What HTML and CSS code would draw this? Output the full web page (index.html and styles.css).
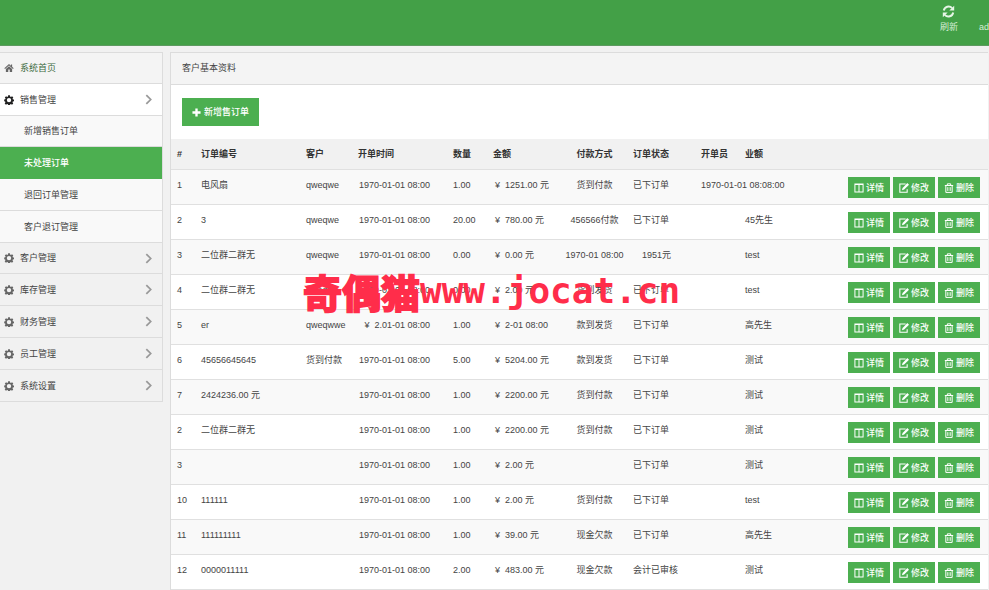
FILE: index.html
```html
<!DOCTYPE html>
<html lang="zh-CN">
<head>
<meta charset="utf-8">
<title>未处理订单</title>
<link rel="stylesheet" href="styles.css">
</head>
<body>
<svg class="sprite" aria-hidden="true">
  <symbol id="home" viewBox="0 0 16 16"><path d="M8 1.5 0.5 8.3l1.2 1.3L8 4l6.300 5.600 1.200-1.300-2.500-2.300V2.500h-2v1.700zM8 5.200 3 9.700V14.500h3.800v-4h2.400v4H13V9.700z"/></symbol>
  <symbol id="gear" viewBox="0 0 16 16"><path fill-rule="evenodd" d="M6.600 0.500h2.800l.4 2 1.300.600 1.800-1.200 2 2-1.200 1.800.6 1.300 1.700.3v2.800l-1.900.4-.5 1.200 1.200 1.900-2 2-1.800-1.200-1.300.6-.3 1.700H6.600l-.4-1.900-1.200-.6-1.900 1.200-2-2 1.200-1.900-.5-1.200-1.500-.3V7.200l1.700-.4.5-1.200-1.200-1.800 2-2 1.800 1.200 1.200-.5zM8 4.600a3.500 3.500 0 1 0 0 7 3.500 3.500 0 0 0 0-7z"/></symbol>
  <symbol id="chevron" viewBox="0 0 8 12"><path d="M1.500 1 6.500 6l-5 5" fill="none" stroke="currentColor" stroke-width="2"/></symbol>
  <symbol id="plus" viewBox="0 0 10 10"><path d="M3.700 0.500h2.600v3.200h3.200v2.600H6.300v3.200H3.700V6.300H0.500V3.700h3.200z"/></symbol>
  <symbol id="refresh" viewBox="0 0 16 16"><path d="M2.200 6.800A6 6 0 0 1 12.500 3.800M13.800 9.200A6 6 0 0 1 3.500 12.200" fill="none" stroke="currentColor" stroke-width="2.400"/><path d="M15 .8v6H9zM1 15.200v-6h6z"/></symbol>
  <symbol id="columns" viewBox="0 0 12 12"><path fill-rule="evenodd" d="M0.500 0.500h11v11H.5zM1.700 2.500v7.800h3.700V2.500zm4.900 0v7.800h3.700V2.500z"/></symbol>
  <symbol id="edit" viewBox="0 0 12 12"><path d="M8 1.200H1v9.800h8.800V7.500" fill="none" stroke="currentColor" stroke-width="1.300"/><path d="M10 0l2 2-5.800 5.900-2.700.8.800-2.800z"/></symbol>
  <symbol id="trash" viewBox="0 0 12 12"><path d="M4 2.500V1h4v1.500M1 3h10M2.200 3v8.300h7.600V3M4.600 5v4.500M7.400 5v4.500" fill="none" stroke="currentColor" stroke-width="1.200"/></symbol>
</svg>

<header class="topbar">
  <button class="top-action" type="button"><svg class="icon-refresh"><use href="#refresh"/></svg><span>刷新</span></button>
  <a class="top-user" href="#">ad</a>
</header>

<div class="layout">
  <nav class="sidebar">
    <a class="nav-item home" href="#"><svg class="icon"><use href="#home"/></svg>系统首页</a>
    <a class="nav-item open" href="#"><svg class="icon"><use href="#gear"/></svg>销售管理<svg class="chevron"><use href="#chevron"/></svg></a>
    <div class="submenu">
      <a class="sub-item" href="#">新增销售订单</a>
      <a class="sub-item active" href="#">未处理订单</a>
      <a class="sub-item" href="#">退回订单管理</a>
      <a class="sub-item" href="#">客户退订管理</a>
    </div>
    <a class="nav-item closed" href="#"><svg class="icon"><use href="#gear"/></svg>客户管理<svg class="chevron"><use href="#chevron"/></svg></a>
    <a class="nav-item closed" href="#"><svg class="icon"><use href="#gear"/></svg>库存管理<svg class="chevron"><use href="#chevron"/></svg></a>
    <a class="nav-item closed" href="#"><svg class="icon"><use href="#gear"/></svg>财务管理<svg class="chevron"><use href="#chevron"/></svg></a>
    <a class="nav-item closed" href="#"><svg class="icon"><use href="#gear"/></svg>员工管理<svg class="chevron"><use href="#chevron"/></svg></a>
    <a class="nav-item closed" href="#"><svg class="icon"><use href="#gear"/></svg>系统设置<svg class="chevron"><use href="#chevron"/></svg></a>
  </nav>

  <main class="panel">
    <h1 class="panel-title">客户基本资料</h1>
    <div class="toolbar"><button class="add" type="button"><svg class="icon-plus"><use href="#plus"/></svg>新增售订单</button></div>
    <div class="table-wrap">
    <table class="orders">
      <colgroup><col class="c-no"><col class="c-order"><col class="c-client"><col class="c-time"><col class="c-qty"><col class="c-sum"><col class="c-pay"><col class="c-state"><col class="c-clerk"><col class="c-owner"><col class="c-ops"></colgroup>
      <thead>
        <tr><th>#</th><th>订单编号</th><th>客户</th><th>开单时间</th><th>数量</th><th>金额</th><th class="pay">付款方式</th><th>订单状态</th><th>开单员</th><th>业额</th><th></th></tr>
      </thead>
      <tbody>
        <tr><td>1</td><td>电风扇</td><td>qweqwe</td><td class="time">1970-01-01 08:00</td><td>1.00</td><td class="sum">¥&nbsp; 1251.00 元</td><td class="pay">货到付款</td><td>已下订单</td><td colspan="2">1970-01-01 08:08:00</td><td class="ops"><div class="actions"><button type="button"><svg><use href="#columns"/></svg>详情</button><button type="button"><svg><use href="#edit"/></svg>修改</button><button type="button"><svg><use href="#trash"/></svg>删除</button></div></td></tr>
        <tr><td>2</td><td>3</td><td>qweqwe</td><td class="time">1970-01-01 08:00</td><td>20.00</td><td class="sum">¥&nbsp; 780.00 元</td><td class="pay">456566付款</td><td>已下订单</td><td></td><td>45先生</td><td class="ops"><div class="actions"><button type="button"><svg><use href="#columns"/></svg>详情</button><button type="button"><svg><use href="#edit"/></svg>修改</button><button type="button"><svg><use href="#trash"/></svg>删除</button></div></td></tr>
        <tr><td>3</td><td>二位群二群无</td><td>qweqwe</td><td class="time">1970-01-01 08:00</td><td>0.00</td><td class="sum">¥&nbsp; 0.00 元</td><td class="pay">1970-01 08:00</td><td class="state-sum">1951元</td><td></td><td>test</td><td class="ops"><div class="actions"><button type="button"><svg><use href="#columns"/></svg>详情</button><button type="button"><svg><use href="#edit"/></svg>修改</button><button type="button"><svg><use href="#trash"/></svg>删除</button></div></td></tr>
        <tr><td>4</td><td>二位群二群无</td><td>qweqwe</td><td class="time">1970-01-01 08:00</td><td>0.00</td><td class="sum">¥&nbsp; 2.00 元</td><td class="pay">货到发货</td><td>已下订单</td><td></td><td>test</td><td class="ops"><div class="actions"><button type="button"><svg><use href="#columns"/></svg>详情</button><button type="button"><svg><use href="#edit"/></svg>修改</button><button type="button"><svg><use href="#trash"/></svg>删除</button></div></td></tr>
        <tr><td>5</td><td>er</td><td>qweqwwe</td><td class="time">¥&nbsp; 2.01-01 08:00</td><td>1.00</td><td class="sum">¥&nbsp; 2-01 08:00</td><td class="pay">款到发货</td><td>已下订单</td><td></td><td>高先生</td><td class="ops"><div class="actions"><button type="button"><svg><use href="#columns"/></svg>详情</button><button type="button"><svg><use href="#edit"/></svg>修改</button><button type="button"><svg><use href="#trash"/></svg>删除</button></div></td></tr>
        <tr><td>6</td><td>45656645645</td><td>货到付款</td><td class="time">1970-01-01 08:00</td><td>5.00</td><td class="sum">¥&nbsp; 5204.00 元</td><td class="pay">款到发货</td><td>已下订单</td><td></td><td>测试</td><td class="ops"><div class="actions"><button type="button"><svg><use href="#columns"/></svg>详情</button><button type="button"><svg><use href="#edit"/></svg>修改</button><button type="button"><svg><use href="#trash"/></svg>删除</button></div></td></tr>
        <tr><td>7</td><td>2424236.00 元</td><td></td><td class="time">1970-01-01 08:00</td><td>1.00</td><td class="sum">¥&nbsp; 2200.00 元</td><td class="pay">货到付款</td><td>已下订单</td><td></td><td>测试</td><td class="ops"><div class="actions"><button type="button"><svg><use href="#columns"/></svg>详情</button><button type="button"><svg><use href="#edit"/></svg>修改</button><button type="button"><svg><use href="#trash"/></svg>删除</button></div></td></tr>
        <tr><td>2</td><td>二位群二群无</td><td></td><td class="time">1970-01-01 08:00</td><td>1.00</td><td class="sum">¥&nbsp; 2200.00 元</td><td class="pay">货到付款</td><td>已下订单</td><td></td><td>测试</td><td class="ops"><div class="actions"><button type="button"><svg><use href="#columns"/></svg>详情</button><button type="button"><svg><use href="#edit"/></svg>修改</button><button type="button"><svg><use href="#trash"/></svg>删除</button></div></td></tr>
        <tr><td>3</td><td></td><td></td><td class="time">1970-01-01 08:00</td><td>1.00</td><td class="sum">¥&nbsp; 2.00 元</td><td></td><td>已下订单</td><td></td><td>测试</td><td class="ops"><div class="actions"><button type="button"><svg><use href="#columns"/></svg>详情</button><button type="button"><svg><use href="#edit"/></svg>修改</button><button type="button"><svg><use href="#trash"/></svg>删除</button></div></td></tr>
        <tr><td>10</td><td>111111</td><td></td><td class="time">1970-01-01 08:00</td><td>1.00</td><td class="sum">¥&nbsp; 2.00 元</td><td class="pay">货到付款</td><td>已下订单</td><td></td><td>test</td><td class="ops"><div class="actions"><button type="button"><svg><use href="#columns"/></svg>详情</button><button type="button"><svg><use href="#edit"/></svg>修改</button><button type="button"><svg><use href="#trash"/></svg>删除</button></div></td></tr>
        <tr><td>11</td><td>111111111</td><td></td><td class="time">1970-01-01 08:00</td><td>1.00</td><td class="sum">¥&nbsp; 39.00 元</td><td class="pay">现金欠款</td><td>已下订单</td><td></td><td>高先生</td><td class="ops"><div class="actions"><button type="button"><svg><use href="#columns"/></svg>详情</button><button type="button"><svg><use href="#edit"/></svg>修改</button><button type="button"><svg><use href="#trash"/></svg>删除</button></div></td></tr>
        <tr><td>12</td><td>0000011111</td><td></td><td class="time">1970-01-01 08:00</td><td>2.00</td><td class="sum">¥&nbsp; 483.00 元</td><td class="pay">现金欠款</td><td>会计已审核</td><td></td><td>测试</td><td class="ops"><div class="actions"><button type="button"><svg><use href="#columns"/></svg>详情</button><button type="button"><svg><use href="#edit"/></svg>修改</button><button type="button"><svg><use href="#trash"/></svg>删除</button></div></td></tr>
      </tbody>
    </table>
    <div class="watermark"><span class="mark-name">奇偶猫</span><span class="mark-url">www.jocat.cn</span></div>
    </div>
  </main>
</div>
</body>
</html>
```

FILE: styles.css
```css
* { box-sizing: border-box; }
body {
  margin: 0;
  background: #f1f1f1;
  color: #444;
  font-family: "Liberation Sans", "Noto Sans CJK SC", sans-serif;
  font-size: 9px;
  line-height: 16px;
  overflow-x: hidden;
}
a { color: inherit; text-decoration: none; }
button { font: inherit; color: inherit; border: 0; padding: 0; background: none; cursor: pointer; }
svg { fill: currentColor; flex: none; }
.sprite { position: absolute; width: 0; height: 0; }

.topbar {
  display: flex;
  justify-content: flex-end;
  align-items: flex-start;
  gap: 21px;
  height: 46px;
  padding-top: 5px;
  background: #43a047;
  border-bottom: 1px solid #5d9a60;
  color: #d5edd6;
}
.top-action { display: flex; flex-direction: column; align-items: center; gap: 1px; }
.icon-refresh { width: 13px; height: 13px; color: #e6f5e6; }
.top-user { padding-top: 14px; }

.layout { display: flex; align-items: flex-start; gap: 7px; padding: 6px 1px 0 0; }

.sidebar { flex: none; width: 163px; border: 1px solid #dcdcdc; border-width: 1px 1px 0 0; }
.nav-item {
  display: flex;
  align-items: center;
  gap: 6px;
  height: 32px;
  padding: 0 10px 0 4px;
  border-bottom: 1px solid #dcdcdc;
}
.home { height: 31px; background: #f4f4f4; color: #3d6b3f; }
.open { background: #fff; }
.closed { height: 31px; }
.closed + .closed { height: 32px; }
.icon { width: 10px; height: 10px; color: #666; }
.open .icon { color: #222; }
.chevron { width: 7px; height: 11px; margin-left: auto; color: #999; }
.sub-item {
  display: flex;
  align-items: center;
  height: 32px;
  padding-left: 24px;
  background: #f9f9f9;
  border-bottom: 1px solid #dcdcdc;
}
.sub-item:first-child { height: 31px; }
.active { background: #4caf50; border-color: #4caf50; color: #fff; font-weight: 500; }

.panel { flex: 1; min-width: 0; background: #fff; border: 1px solid #dcdcdc; border-width: 1px 0 0 1px; }
.panel-title {
  margin: 0;
  padding: 7px 11px 8px;
  background: #f4f4f4;
  border-bottom: 1px solid #dcdcdc;
  font-size: 9px;
  font-weight: 400;
}
.toolbar { padding: 13px 11px; }
.add {
  display: flex;
  align-items: center;
  gap: 3px;
  height: 28px;
  padding: 0 10px;
  background: #4caf50;
  color: #fff;
  font-weight: 500;
}
.icon-plus { width: 9px; height: 9px; }

.table-wrap { position: relative; }
.orders { width: 100%; border-collapse: separate; border-spacing: 0; table-layout: fixed; }
.c-no { width: 24px; }
.c-order { width: 105px; }
.c-client { width: 52px; }
.c-time { width: 95px; }
.c-qty { width: 40px; }
.c-sum { width: 75px; }
.c-pay { width: 65px; }
.c-state { width: 68px; }
.c-clerk { width: 44px; }
.c-ops { width: 147px; }
.orders th, .orders td {
  padding: 7px 0 0 6px;
  border-bottom: 1px solid #e0e0e0;
  text-align: left;
  vertical-align: top;
  white-space: nowrap;
}
.orders th { height: 31px; background: #f1f1f1; color: #333; font-weight: 700; }
.orders td { height: 35px; }
.orders tbody tr:nth-child(odd) { background: #f9f9f9; }
.orders .time { padding-right: 17px; text-align: right; }
.orders .sum { padding-left: 8px; }
.orders .pay { padding-left: 0; text-align: center; }
.orders .state-sum { padding-left: 15px; }
.orders .ops { padding: 7px 8px 0 6px; }
.actions { display: flex; justify-content: flex-end; gap: 3px; }
.actions button {
  display: flex;
  align-items: center;
  justify-content: center;
  gap: 2px;
  width: 42px;
  height: 21px;
  background: #4caf50;
  color: #fff;
  font-weight: 500;
}
.actions svg { width: 10px; height: 10px; }

.watermark {
  position: absolute;
  left: 132px;
  top: 128px;
  display: flex;
  align-items: center;
  color: #ff2d4a;
  font-weight: 700;
  line-height: 48px;
  white-space: nowrap;
  pointer-events: none;
}
.mark-name { font-family: "Noto Sans CJK SC", sans-serif; font-size: 39px; -webkit-text-stroke: 2px #ff2d4a; }
.mark-url { font-family: "DejaVu Sans Mono", monospace; font-size: 36px; }
```
